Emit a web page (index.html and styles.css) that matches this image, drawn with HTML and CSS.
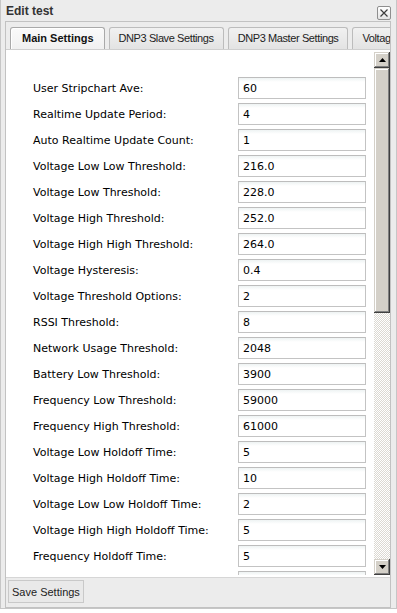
FILE: index.html
```html
<!DOCTYPE html>
<html lang="en">
<head>
  <meta charset="UTF-8">
  <link rel="stylesheet" href="styles.css">
</head>
<body>

  <div class="dialog">
    <div class="dialog-header">
      <span class="dialog-title">Edit test</span>
      <button class="close-btn" title="Close">
        <svg width="8" height="8" viewBox="0 0 8 8"><path d="M0.5 0.5 L7.5 7.5 M7.5 0.5 L0.5 7.5" stroke="#3c3c3c" stroke-width="1.2" fill="none"/></svg>
      </button>
    </div>

    <div class="panel">
      <ul class="tabs">
        <li class="tab active">Main Settings</li>
        <li class="tab">DNP3 Slave Settings</li>
        <li class="tab">DNP3 Master Settings</li>
        <li class="tab">Voltage Settings</li>
      </ul>

      <div class="tab-body">
        <form class="fields">
          <div class="row"><label>User Stripchart Ave:</label><input type="text" value="60"></div>
          <div class="row"><label>Realtime Update Period:</label><input type="text" value="4"></div>
          <div class="row"><label>Auto Realtime Update Count:</label><input type="text" value="1"></div>
          <div class="row"><label>Voltage Low Low Threshold:</label><input type="text" value="216.0"></div>
          <div class="row"><label>Voltage Low Threshold:</label><input type="text" value="228.0"></div>
          <div class="row"><label>Voltage High Threshold:</label><input type="text" value="252.0"></div>
          <div class="row"><label>Voltage High High Threshold:</label><input type="text" value="264.0"></div>
          <div class="row"><label>Voltage Hysteresis:</label><input type="text" value="0.4"></div>
          <div class="row"><label>Voltage Threshold Options:</label><input type="text" value="2"></div>
          <div class="row"><label>RSSI Threshold:</label><input type="text" value="8"></div>
          <div class="row"><label>Network Usage Threshold:</label><input type="text" value="2048"></div>
          <div class="row"><label>Battery Low Threshold:</label><input type="text" value="3900"></div>
          <div class="row"><label>Frequency Low Threshold:</label><input type="text" value="59000"></div>
          <div class="row"><label>Frequency High Threshold:</label><input type="text" value="61000"></div>
          <div class="row"><label>Voltage Low Holdoff Time:</label><input type="text" value="5"></div>
          <div class="row"><label>Voltage High Holdoff Time:</label><input type="text" value="10"></div>
          <div class="row"><label>Voltage Low Low Holdoff Time:</label><input type="text" value="2"></div>
          <div class="row"><label>Voltage High High Holdoff Time:</label><input type="text" value="5"></div>
          <div class="row"><label>Frequency Holdoff Time:</label><input type="text" value="5"></div>
          <div class="row"><label></label><input type="text" value=""></div>
        </form>

        <div class="scrollbar">
          <div class="sb-btn">
            <svg width="7" height="4" viewBox="0 0 7 4"><path d="M3.5 0 L7 4 L0 4 Z" fill="#000"/></svg>
          </div>
          <div class="sb-track">
            <div class="sb-thumb"></div>
          </div>
          <div class="sb-btn">
            <svg width="7" height="4" viewBox="0 0 7 4"><path d="M0 0 L7 0 L3.5 4 Z" fill="#000"/></svg>
          </div>
        </div>
      </div>

      <div class="panel-footer">
        <button class="save-btn">Save Settings</button>
      </div>
    </div>
  </div>

</body>
</html>
```

FILE: styles.css
```css
body {
  margin: 0;
  padding: 0;
  background: #fff;
  font-family: 'Liberation Sans', Arial, sans-serif;
  font-size: 11px;
  color: #000;
}

.dialog {
  width: 397px;
  height: 609px;
  box-sizing: border-box;
  background: #ececec;
  border: 1px solid #c6c6c6;
  border-top: none;
  display: flex;
  flex-direction: column;
}

.dialog-header {
  height: 21px;
  display: flex;
  align-items: center;
  justify-content: space-between;
  padding: 0 5px 0 5px;
}

.dialog-title {
  font-weight: bold;
  font-size: 12px;
  color: #333;
}

.close-btn {
  width: 14px;
  height: 14px;
  padding: 0;
  margin-top: 5px;
  border: 1px solid #8f8f8f;
  border-radius: 2px;
  background: linear-gradient(#ffffff, #e4e4e4);
  display: flex;
  align-items: center;
  justify-content: center;
}

.panel {
  flex: 1;
  margin: 0 5px 0 4px;
  border: 1px solid #c2c2c2;
  display: flex;
  flex-direction: column;
  min-height: 0;
}

.tabs {
  list-style: none;
  margin: 0;
  padding: 5px 0 0 4px;
  display: flex;
  gap: 4px;
  height: 22px;
  overflow: hidden;
  border-bottom: 1px solid #cfcfcf;
}

.tab {
  flex: none;
  height: 21px;
  line-height: 20px;
  padding: 0 9px;
  letter-spacing: -0.4px;
  border: 1px solid #bcbcbc;
  border-bottom: none;
  border-radius: 3px 3px 0 0;
  background: linear-gradient(#f1f1f1, #e3e3e3);
  color: #222;
  white-space: nowrap;
}

.tab.active {
  font-weight: bold;
  letter-spacing: 0;
  padding: 0 10px 0 11px;
  color: #111;
  background: linear-gradient(#fafafa, #f0f0f0);
  border-color: #a9a9a9;
  box-shadow: inset 1px 1px #fff;
  height: 22px;
}

.tab-body {
  flex: 1;
  min-height: 0;
  background: #fff;
  padding: 2px 0 2px 1px;
  display: flex;
}

.fields {
  flex: 1;
  margin: 0;
  overflow: hidden;
  padding: 25px 0 0 26px;
  font-family: 'DejaVu Sans', Verdana, sans-serif;
  font-size: 11px;
}

.row {
  display: flex;
  align-items: center;
  height: 22px;
  margin-bottom: 4px;
}

.row label {
  width: 205px;
  flex: none;
}

.row input {
  width: 128px;
  height: 22px;
  box-sizing: border-box;
  border: 1px solid #c3c3c3;
  border-top-color: #bdbdbd;
  background: linear-gradient(#eef3f3, #ffffff 4px);
  padding: 0 4px;
  font-family: 'DejaVu Sans', Verdana, sans-serif;
  font-size: 11px;
  color: #000;
  outline: none;
}

/* classic windows style scrollbar */
.scrollbar {
  width: 16px;
  flex: none;
  display: flex;
  flex-direction: column;
}

.sb-btn,
.sb-thumb {
  background: #d4d0c8;
  box-shadow: inset -1px -1px #404040, inset 1px 1px #d4d0c8, inset -2px -2px #808080, inset 2px 2px #fff;
}

.sb-btn {
  height: 16px;
  display: flex;
  align-items: center;
  justify-content: center;
}

.sb-track {
  flex: 1;
  background: repeating-conic-gradient(#dcd9d2 0 25%, #fff 0 50%) 0 0 / 2px 2px;
}

.sb-thumb {
  height: 245px;
}

.panel-footer {
  height: 30px;
  flex: none;
  border-top: 1px solid #d6d6d6;
  padding: 2px 0 0 2px;
  box-sizing: border-box;
}

.save-btn {
  height: 23px;
  padding: 0 3px;
  border: 1px solid #c9c9c9;
  background: #e9e9e9;
  font-family: 'Liberation Sans', Arial, sans-serif;
  font-size: 11px;
  color: #222;
}
```
